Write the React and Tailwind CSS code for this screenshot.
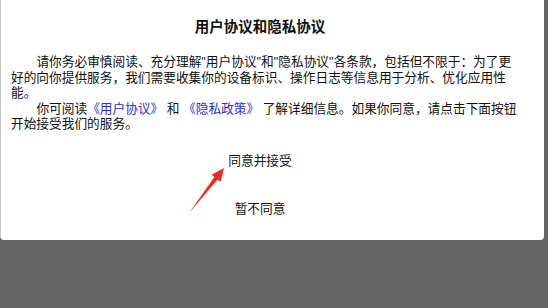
import React from 'react';

const font = { fontFamily: '"Liberation Sans", "Noto Sans CJK SC", sans-serif' };

export default function App() {
  return (
    <div className="relative w-[548px] h-[308px] bg-[#666666] overflow-hidden" style={font}>
      {/* 弹窗 */}
      <div className="w-[544px] h-[240px] bg-white rounded-b-[4px] border-l border-[#c8c8c8] pt-[18px]">
        <div className="ml-[10px] w-[506px] flex flex-col">
          <h1 className="text-center text-[14.5px] leading-[18px] font-bold text-[#111] pr-[8px]">用户协议和隐私协议</h1>

          <div className="mt-[19px] text-[12.7px] leading-[15.5px] text-[#111]">
            <p className="indent-[2em]">
              请你务必审慎阅读、充分理解"用户协议"和"隐私协议"各条款，包括但不限于：为了更好的向你提供服务，我们需要收集你的设备标识、操作日志等信息用于分析、优化应用性能。
            </p>
            <p className="indent-[2em]">
              你可阅读<span className="text-[#2a2fd0]">《用户协议》</span> 和 <span className="text-[#2a2fd0]">《隐私政策》</span> 了解详细信息。如果你同意，请点击下面按钮开始接受我们的服务。
            </p>
          </div>

          {/* 按钮 */}
          <div className="flex flex-col items-center text-[12.7px] leading-[16px] text-[#111] pr-[8px]">
            <button className="mt-[20px]">同意并接受</button>
            <button className="mt-[32px]">暂不同意</button>
          </div>
        </div>
      </div>

      {/* 红色箭头 */}
      <svg className="absolute left-0 top-0 pointer-events-none" width="548" height="308" viewBox="0 0 548 308">
        <polygon
          points="189,213 217.6,179.6 220.5,182 224,168 211.5,174.7 214.4,177"
          fill="#f0281e"
        />
      </svg>
    </div>
  );
}
